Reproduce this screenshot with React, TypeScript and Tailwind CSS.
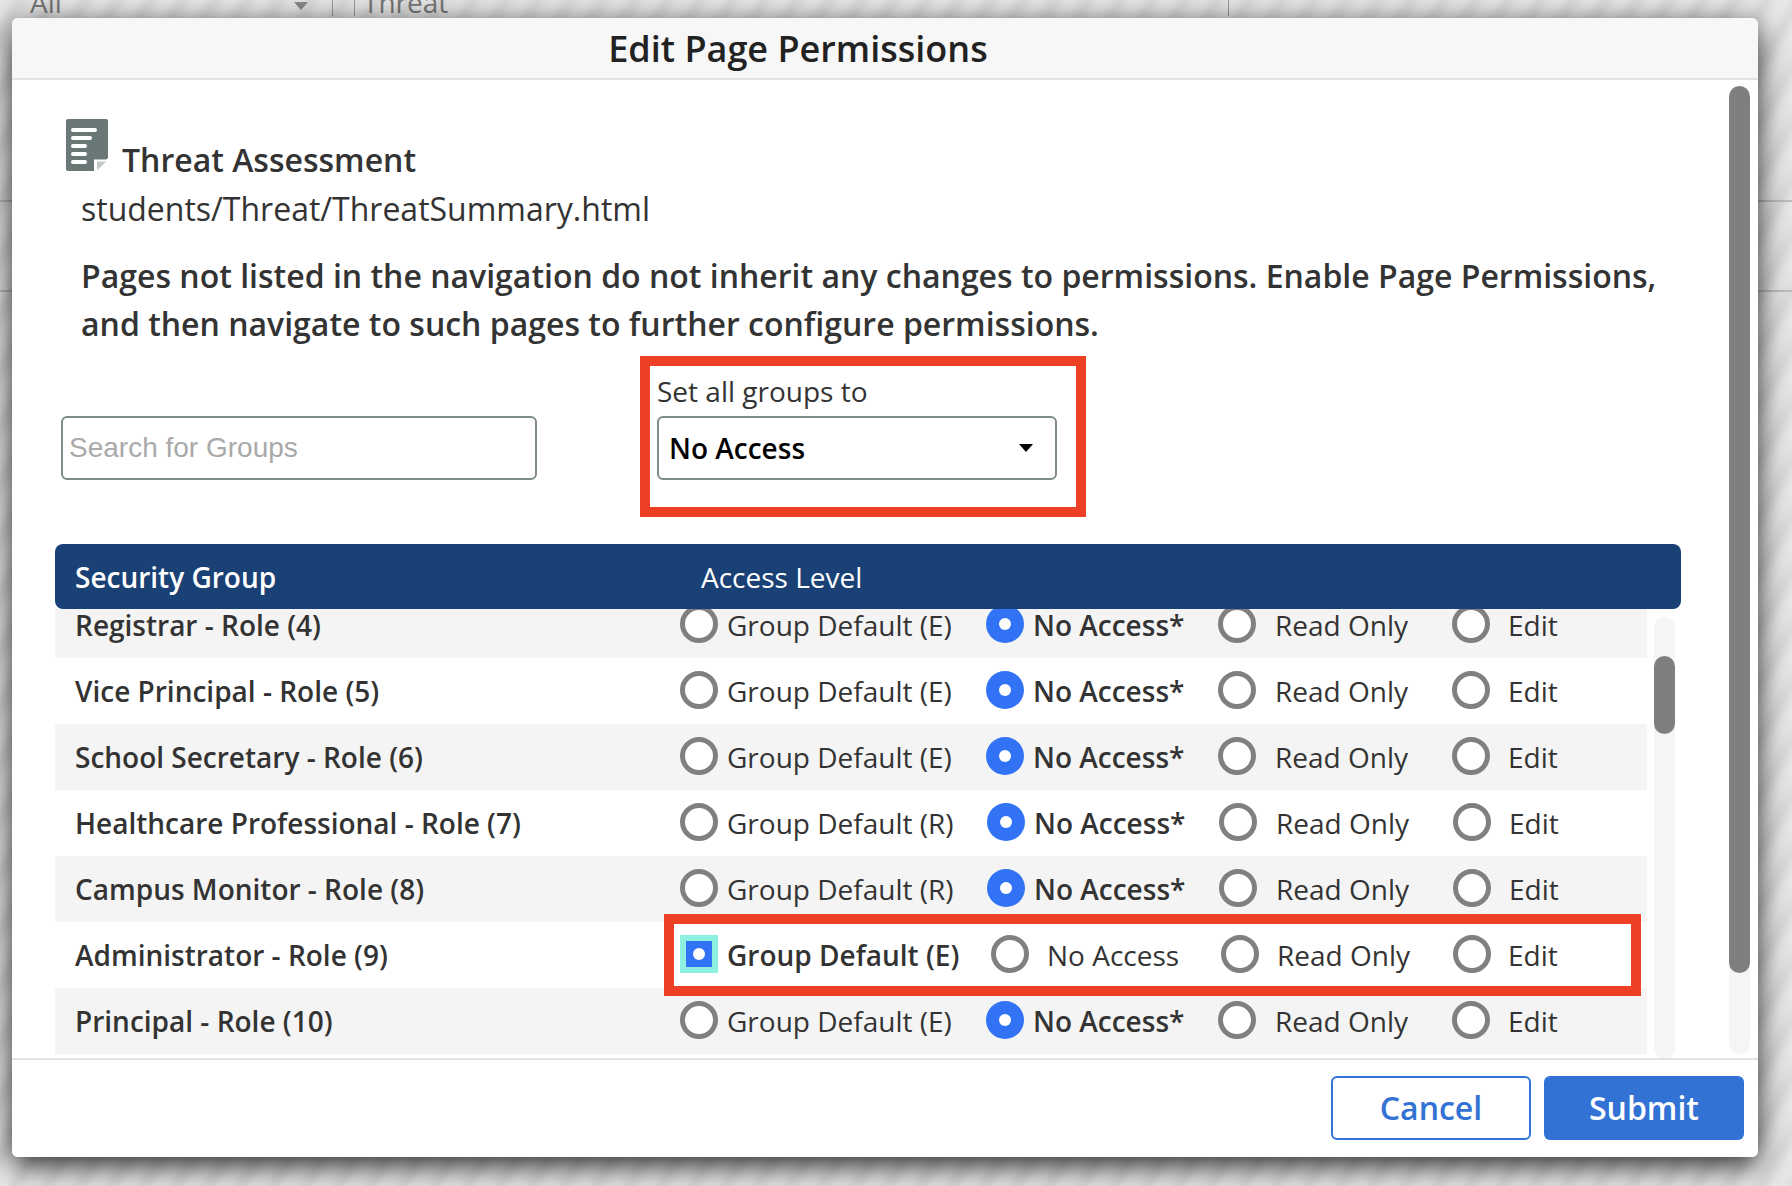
import React from "react";

function DocIcon() {
  return (
    <svg width="42" height="52" viewBox="0 0 42 52" className="shrink-0">
      <path d="M2 0H40a2 2 0 0 1 2 2V39L28 52H2a2 2 0 0 1-2-2V2a2 2 0 0 1 2-2Z" fill="#6a7777" />
      <path d="M28 52V40.5H42V41L30 52Z" fill="#ffffff" />
      <path d="M31 51V42.5H40.5Z" fill="#c3c7c7" />
      <g fill="#ffffff">
        <rect x="5" y="9" width="26" height="4" rx="2" />
        <rect x="5" y="17" width="21" height="4" rx="2" />
        <rect x="5" y="25" width="16" height="4" rx="2" />
        <rect x="5" y="33" width="16" height="4" rx="2" />
        <rect x="5" y="41" width="16" height="4" rx="2" />
      </g>
    </svg>
  );
}

function Radio({ on, focus }: { on?: boolean; focus?: boolean }) {
  if (focus) {
    return (
      <span className="flex h-[38px] w-[38px] shrink-0 -translate-y-px items-center justify-center bg-[#8df0e0]">
        <span className="flex h-[26px] w-[26px] items-center justify-center bg-[#3273f6]">
          <span className="h-[12px] w-[12px] rounded-full bg-white" />
        </span>
      </span>
    );
  }
  if (on) {
    return (
      <span className="flex h-[38px] w-[38px] shrink-0 -translate-y-px items-center justify-center rounded-full bg-[#3273f6]">
        <span className="h-[12px] w-[12px] rounded-full bg-white" />
      </span>
    );
  }
  return <span className="h-[38px] w-[38px] shrink-0 -translate-y-px rounded-full border-[5px] border-[#808080] bg-white" />;
}

type RowData = { name: string; def: string; shade: boolean; wide?: boolean };

const rows: RowData[] = [
  { name: "Registrar - Role (4)", def: "Group Default (E)", shade: true },
  { name: "Vice Principal - Role (5)", def: "Group Default (E)", shade: false },
  { name: "School Secretary - Role (6)", def: "Group Default (E)", shade: true },
  { name: "Healthcare Professional - Role (7)", def: "Group Default (R)", shade: false, wide: true },
  { name: "Campus Monitor - Role (8)", def: "Group Default (R)", shade: true, wide: true },
];

function Row({ name, def, shade, wide }: RowData) {
  return (
    <div className={shade ? "flex h-[66px] items-center bg-[#f4f4f4]" : "flex h-[66px] items-center bg-white"}>
      <div className="w-[625px] pl-5 font-semibold">{name}</div>
      <Radio />
      <span className={wide ? "ml-[9px] w-[260px]" : "ml-[9px] w-[259px]"}>{def}</span>
      <Radio on />
      <span className="ml-[9px] w-[185px] font-semibold">No Access*</span>
      <Radio />
      <span className="ml-[19px] w-[177px]">Read Only</span>
      <Radio />
      <span className="ml-[18px]">Edit</span>
    </div>
  );
}

export default function App() {
  return (
    <div className="relative h-[1186px] w-[1792px] overflow-hidden bg-[repeating-linear-gradient(120deg,#e7e7e7_0px,#e7e7e7_8px,#dcdcdc_16px,#dcdcdc_20px,#e7e7e7_28px)] font-['Open_Sans',sans-serif] text-[#333333]">
      {/* page behind the dialog */}
      <div className="flex h-[16px] items-end overflow-hidden pl-[30px] text-[28px] leading-[28px] text-[#777777]">
        <span className="w-[264px]">All</span>
        <span className="mb-[6px] h-0 w-0 border-x-[7px] border-t-[8px] border-x-transparent border-t-[#888888]" />
        <span className="ml-[24px] h-full w-px bg-[#999999]" />
        <span className="ml-[21px] h-full w-px bg-[#999999]" />
        <span className="ml-[8px] w-[865px]">Threat</span>
        <span className="h-full w-px bg-[#999999]" />
      </div>
      <div className="mt-[184px] h-[2px] bg-[#bdbdbd]" />
      <div className="mt-[88px] h-[2px] bg-[#bdbdbd]" />

      {/* dialog */}
      <div className="absolute left-[12px] top-[18px] flex h-[1139px] w-[1746px] flex-col overflow-hidden rounded-[6px] bg-white shadow-[0_8px_30px_rgba(0,0,0,0.85)]">
        <div className="flex h-[62px] shrink-0 items-center justify-center border-b-2 border-[#e3e3e3] bg-[#f7f7f7] pr-[174px] pt-px text-[36px] font-semibold text-[#222222]">
          Edit Page Permissions
        </div>

        <div className="relative h-[978px] shrink-0 overflow-hidden pl-[43px] pt-[39px]">
          <div className="ml-[11px] flex h-[62px] items-start">
            <DocIcon />
            <div className="ml-[14px] mt-[21px] text-[32px] font-semibold leading-[40px]">Threat Assessment</div>
          </div>
          <div className="ml-[26px] mt-[8px] text-[32px] leading-[40px]">students/Threat/ThreatSummary.html</div>
          <div className="ml-[26px] mt-[23px] w-[1610px] text-[32px] font-semibold leading-[48px]">
            Pages not listed in the navigation do not inherit any changes to permissions. Enable Page Permissions, and
            then navigate to such pages to further configure permissions.
          </div>

          <div className="mt-[8px] flex items-start">
            <input
              placeholder="Search for Groups"
              className="ml-[6px] mt-[60px] h-[64px] w-[476px] rounded-[6px] border-2 border-[#7f8c8d] bg-white px-[6px] font-['Liberation_Sans',sans-serif] text-[28px] placeholder:text-[#a9a9a9]"
            />
            <div className="ml-[103px] h-[161px] w-[446px] border-[10px] border-[#ee4024] pl-[7px] pr-[19px]">
              <div className="h-[50px] pt-[5px] text-[28px] leading-[40px]">Set all groups to</div>
              <div className="flex h-[64px] items-center justify-between rounded-[6px] border-2 border-[#7f8c8d] pl-[10px] pr-[22px] text-[28px] font-semibold text-black">
                <span>No Access</span>
                <span className="h-0 w-0 border-x-[7px] border-t-[8px] border-x-transparent border-t-black" />
              </div>
            </div>
          </div>

          <div className="relative mt-[27px] w-[1626px] text-[28px]">
            <div className="relative z-10 flex h-[65px] items-center rounded-[8px] bg-[#1a4175] pl-5 text-white">
              <span className="w-[626px] font-semibold">Security Group</span>
              <span>Access Level</span>
            </div>
            <div className="h-[450px] w-[1592px] overflow-hidden">
              <div className="-mt-[17px]">
                {rows.map((r) => (
                  <Row key={r.name} {...r} />
                ))}
                <div className="flex h-[66px] items-center bg-white">
                  <div className="w-[625px] pl-5 font-semibold">Administrator - Role (9)</div>
                  <Radio focus />
                  <span className="ml-[9px] w-[264px] font-semibold">Group Default (E)</span>
                  <Radio />
                  <span className="ml-[18px] w-[174px]">No Access</span>
                  <Radio />
                  <span className="ml-[18px] w-[176px]">Read Only</span>
                  <Radio />
                  <span className="ml-[17px]">Edit</span>
                </div>
                <Row name="Principal - Role (10)" def="Group Default (E)" shade />
              </div>
            </div>
            {/* red highlight over the Administrator row */}
            <div className="absolute left-[609px] top-[370px] h-[82px] w-[977px] border-[10px] border-[#ee4024]" />
            {/* inner scrollbar */}
            <div className="absolute left-[1599px] top-[73px] h-[442px] w-[21px] rounded-full bg-[#f5f5f5]">
              <div className="mt-[39px] h-[78px] rounded-full bg-[#7f7f7f]" />
            </div>
          </div>

          {/* outer scrollbar */}
          <div className="absolute left-[1717px] top-[6px] h-[968px] w-[21px] rounded-full bg-[#f5f5f5]">
            <div className="h-[887px] rounded-full bg-[#7f7f7f]" />
          </div>
        </div>

        <div className="flex flex-1 items-start justify-end gap-[13px] border-t-2 border-[#e3e3e3] bg-white pr-[14px] pt-[16px] text-[32px] font-semibold">
          <div className="flex h-[64px] w-[200px] items-center justify-center rounded-[6px] border-2 border-[#3272d5] text-[#3272d5]">
            Cancel
          </div>
          <div className="flex h-[64px] w-[200px] items-center justify-center rounded-[6px] bg-[#3272d5] text-white">
            Submit
          </div>
        </div>
      </div>
    </div>
  );
}
